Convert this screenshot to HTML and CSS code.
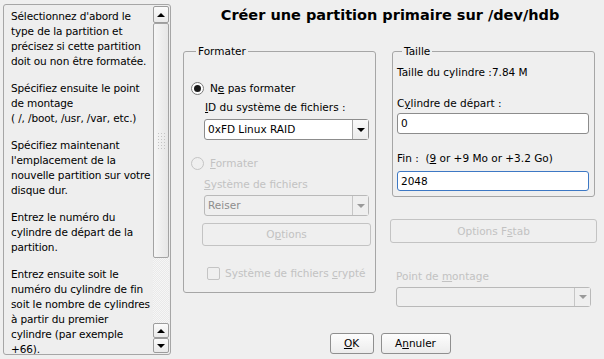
FILE: index.html
```html
<!DOCTYPE html>
<html>
<head>
    <title>Créer une partition</title>
    <link rel="stylesheet" href="styles.css">
</head>
<body>
    <div class="dialog">
        <div class="help">
            <div class="help-text">
                <p>Sélectionnez d'abord le<br>type de la partition et<br>précisez si cette partition<br>doit ou non être formatée.</p>
                <p>Spécifiez ensuite le point<br>de montage<br>( /, /boot, /usr, /var, etc.)</p>
                <p>Spécifiez maintenant<br>l'emplacement de la<br>nouvelle partition sur votre<br>disque dur.</p>
                <p>Entrez le numéro du<br>cylindre de départ de la<br>partition.</p>
                <p>Entrez ensuite soit le<br>numéro du cylindre de fin<br>soit le nombre de cylindres<br>à partir du premier<br>cylindre (par exemple<br>+66).</p>
            </div>
            <div class="scrollbar">
                <div class="sb-btn up"></div>
                <div class="sb-thumb"><span class="grip"></span></div>
                <div class="sb-track"></div>
                <div class="sb-btn up"></div>
                <div class="sb-btn down"></div>
            </div>
        </div>

        <div class="main">
            <h1 class="title">Créer une partition primaire sur /dev/hdb</h1>

            <div class="columns">
                <fieldset class="group format">
                    <legend>Formater</legend>
                    <div class="option first">
                        <span class="radio on"></span>
                        <span>N<u>e</u> pas formater</span>
                    </div>
                    <div class="indent">
                        <div class="label id-label"><u>I</u>D du système de fichiers :</div>
                        <div class="combo">
                            <span class="combo-text">0xFD Linux RAID</span>
                            <span class="combo-arrow"></span>
                        </div>
                    </div>
                    <div class="option second disabled">
                        <span class="radio"></span>
                        <span><u>F</u>ormater</span>
                    </div>
                    <div class="indent disabled">
                        <div class="label fs-label"><u>S</u>ystème de fichiers</div>
                        <div class="combo off">
                            <span class="combo-text">Reiser</span>
                            <span class="combo-arrow"></span>
                        </div>
                        <div class="button wide options">O<u>p</u>tions</div>
                        <div class="check-row">
                            <span class="check"></span>
                            <span>Système de fichiers <u>c</u>rypté</span>
                        </div>
                    </div>
                </fieldset>

                <div class="side">
                    <fieldset class="group size">
                        <legend>Taille</legend>
                        <div class="label cyl-size">Taille du cylindre :7.84 M</div>
                        <div class="label start-label">C<u>y</u>lindre de départ :</div>
                        <div class="input">0</div>
                        <div class="label end-label">Fin :&nbsp; (<u>9</u> or +9 Mo or +3.2 Go)</div>
                        <div class="input focus">2048</div>
                    </fieldset>
                    <div class="button wide fstab disabled">Options F<u>s</u>tab</div>
                    <div class="label mount-label disabled">Point de <u>m</u>ontage</div>
                    <div class="combo off mount">
                        <span class="combo-text"></span>
                        <span class="combo-arrow"></span>
                    </div>
                </div>
            </div>

            <div class="buttons">
                <div class="button ok"><u>O</u>K</div>
                <div class="button cancel">A<u>n</u>nuler</div>
            </div>
        </div>
    </div>
</body>
</html>
```

FILE: styles.css
```css
* {
    margin: 0;
    padding: 0;
    box-sizing: border-box;
}

body {
    width: 604px;
    height: 359px;
    overflow: hidden;
    background: #efefef;
    font-family: "DejaVu Sans", sans-serif;
    font-size: 10.5px;
    color: #000;
}

u {
    text-decoration: underline;
    text-underline-offset: 1px;
}

.dialog {
    display: flex;
    height: 359px;
}

/* help panel on the left */
.help {
    display: flex;
    width: 169px;
    height: 351px;
    margin: 4px 0 4px 3px;
    border: 1px solid #a6a6a6;
    border-radius: 3px;
    background: #eeeeee;
    overflow: hidden;
}
.help-text {
    flex: 1;
    padding: 4px 0 0 7px;
    line-height: 15px;
    letter-spacing: -0.13px;
    white-space: nowrap;
    overflow: hidden;
}
.help-text p {
    margin-bottom: 12px;
}

.scrollbar {
    width: 16px;
    margin: 0 1px 0 0;
    display: flex;
    flex-direction: column;
    padding-top: 1px;
    padding-bottom: 1px;
}
.sb-btn {
    height: 15px;
    border: 1px solid #9c9c9c;
    border-radius: 2px;
    background: linear-gradient(#fbfbfb, #e9e9e9);
    display: flex;
    align-items: center;
    justify-content: center;
}
.sb-btn.up:first-child {
    height: 17px;
}
.sb-btn::after {
    content: '';
    border-left: 4px solid transparent;
    border-right: 4px solid transparent;
}
.sb-btn.up::after {
    border-bottom: 4px solid #000;
}
.sb-btn.down::after {
    border-top: 4px solid #000;
}
.sb-thumb {
    height: 235px;
    border: 1px solid #a3a3a3;
    border-radius: 2px;
    background: linear-gradient(90deg, #f6f6f6, #e6e6e6);
    display: flex;
    align-items: center;
    justify-content: center;
}
.grip {
    width: 8px;
    height: 18px;
    background: radial-gradient(circle, #c4c4c4 0.8px, transparent 1px) 0 0 / 3px 3px;
}
.sb-track {
    flex: 1;
    background: repeating-conic-gradient(#f6f6f6 0 25%, #e9e9e9 0 50%) 0 0 / 2px 2px;
}

/* right side */
.main {
    flex: 1;
    display: flex;
    flex-direction: column;
    padding: 0 9px 5px 12px;
}
.title {
    margin-top: 7px;
    font-size: 14.5px;
    line-height: 17px;
    font-weight: bold;
    text-align: center;
    padding-left: 2px;
}

.columns {
    display: flex;
    gap: 16px;
    margin-top: 21px;
}

.group {
    border: 1px solid #a6a6a6;
    border-radius: 3px;
}
.group legend {
    margin-left: 5px;
    padding: 0 2px;
    line-height: 13px;
}

.label {
    line-height: 14px;
    white-space: nowrap;
}

.format {
    width: 193px;
    height: 248px;
    padding: 0 6px 0 7px;
}
.option {
    display: flex;
    align-items: center;
    gap: 6px;
    line-height: 14px;
}
.option.first {
    margin-top: 23px;
}
.option.second {
    margin-top: 16px;
}
.indent {
    padding-left: 13px;
}
.id-label {
    margin-top: 5px;
    padding-left: 1px;
}
.fs-label {
    margin-top: 7px;
}

.radio {
    width: 13px;
    height: 13px;
    border: 1px solid #7b7b7b;
    border-radius: 50%;
    background: #fff;
    display: flex;
    align-items: center;
    justify-content: center;
}
.radio.on::after {
    content: '';
    width: 7px;
    height: 7px;
    border-radius: 50%;
    background: #1a1a1a;
}

.combo {
    display: flex;
    height: 21px;
    margin-top: 5px;
    border: 1px solid #8c8c8c;
    border-radius: 3px;
    background: #fff;
}
.combo-text {
    flex: 1;
    padding-left: 3px;
    line-height: 19px;
}
.combo-arrow {
    width: 16px;
    border-left: 1px solid #a6a6a6;
    background: linear-gradient(#f9f9f9, #ececec);
    display: flex;
    align-items: center;
    justify-content: center;
}
.combo-arrow::after {
    content: '';
    border-left: 4px solid transparent;
    border-right: 4px solid transparent;
    border-top: 4px solid #000;
}
.combo.off {
    margin-top: 4px;
    border-color: #b9b9b9;
    background: #efefef;
}
.combo.off .combo-text {
    color: #8d8d8d;
}
.combo.off .combo-arrow {
    border-left-color: #c6c6c6;
    background: #efefef;
}
.combo.off .combo-arrow::after {
    border-top-color: #9a9a9a;
}

.button {
    height: 21px;
    border: 1px solid #8f8f8f;
    border-radius: 3px;
    background: linear-gradient(#fdfdfd, #ececec);
    text-align: center;
    line-height: 19px;
}
.button.wide {
    margin-left: -2px;
    margin-right: -2px;
}
.options {
    height: 23px;
    line-height: 21px;
    margin-top: 7px;
    border-color: #c3c3c3;
    background: #efefef;
}

.check-row {
    display: flex;
    align-items: center;
    gap: 5px;
    margin-top: 20px;
    padding-left: 3px;
    line-height: 14px;
    white-space: nowrap;
}
.check {
    width: 13px;
    height: 13px;
    border: 1px solid #c4c4c4;
    border-radius: 2px;
}

.disabled {
    color: #c2c2c2;
}
.disabled .radio {
    border-color: #c4c4c4;
    background: #efefef;
}

.side {
    width: 203px;
    display: flex;
    flex-direction: column;
}
.size {
    height: 152px;
    padding: 0 5px 0 4px;
}
.cyl-size {
    margin-top: 7px;
}
.start-label {
    margin-top: 17px;
}
.end-label {
    margin-top: 17px;
}
.input {
    height: 21px;
    margin-top: 3px;
    padding-left: 3px;
    border: 1px solid #8c8c8c;
    border-radius: 3px;
    background: #fff;
    line-height: 19px;
}
.input.focus {
    height: 20px;
    margin-top: 6px;
    border-color: #3d78c4;
    line-height: 18px;
}

.fstab {
    height: 24px;
    line-height: 22px;
    margin: 22px -3px 0 4px;
    border-color: #c3c3c3;
    background: #efefef;
}
.mount-label {
    margin-top: 26px;
    padding-left: 4px;
}
.combo.mount {
    height: 20px;
    margin: 4px 4px 0 4px;
}

.buttons {
    margin-top: auto;
    display: flex;
    justify-content: center;
    gap: 7px;
    padding-left: 2px;
}
.ok {
    width: 44px;
}
.cancel {
    width: 70px;
}
```
